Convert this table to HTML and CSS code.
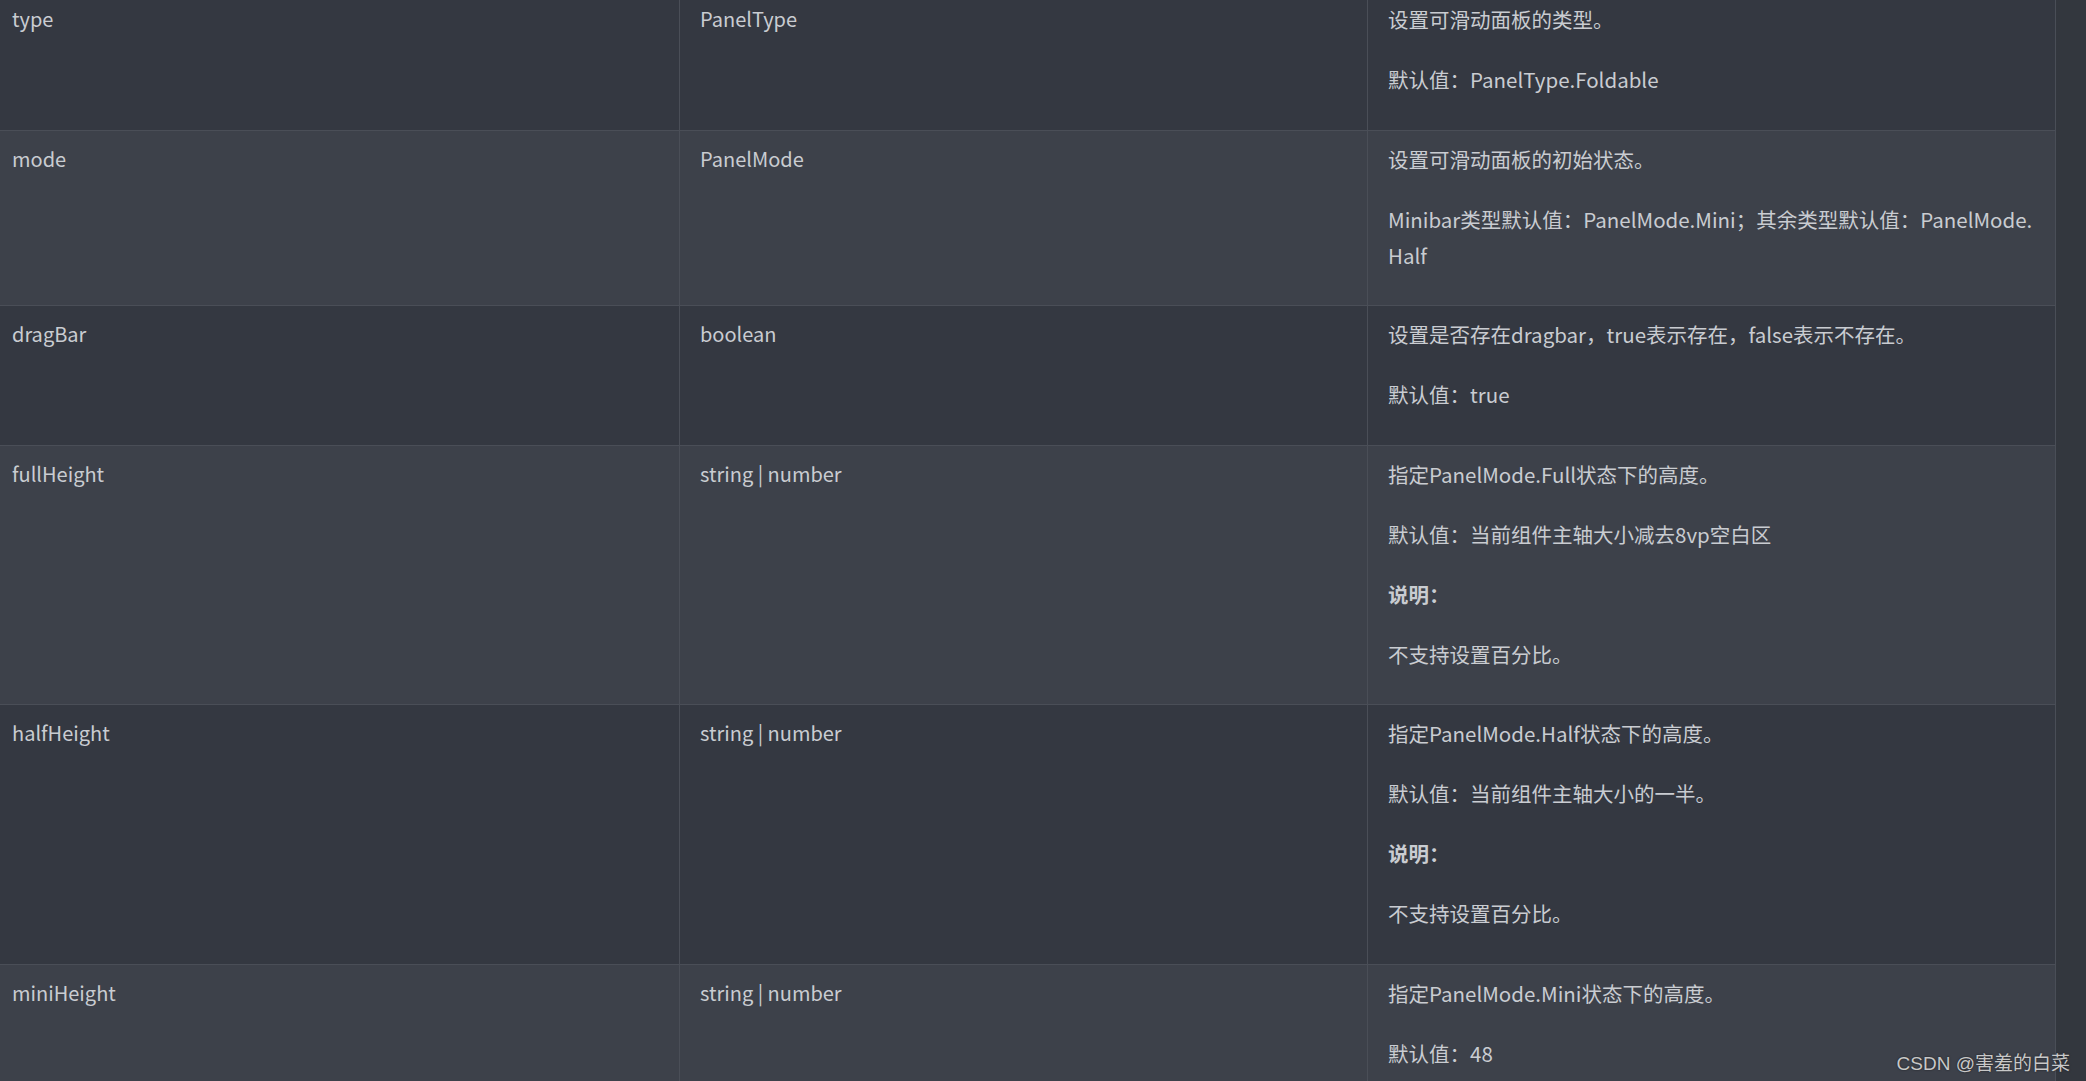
FILE: index.html
```html
<!DOCTYPE html>
<html lang="zh-CN">
<head>
<meta charset="utf-8">
<title>Panel 属性</title>
<link rel="stylesheet" href="styles.css">
</head>
<body>
<div class="page">
  <table class="props">
    <colgroup><col class="c"><col class="c"><col class="c"></colgroup>
    <tbody>
      <tr>
        <td>type</td>
        <td>PanelType</td>
        <td class="desc"><p>设置可滑动面板的类型。</p><p>默认值：PanelType.Foldable</p></td>
      </tr>
      <tr>
        <td>mode</td>
        <td>PanelMode</td>
        <td class="desc"><p>设置可滑动面板的初始状态。</p><p>Minibar类型默认值：PanelMode.Mini；其余类型默认值：PanelMode.<wbr>Half</p></td>
      </tr>
      <tr>
        <td>dragBar</td>
        <td>boolean</td>
        <td class="desc"><p>设置是否存在dragbar，true表示存在，false表示不存在。</p><p>默认值：true</p></td>
      </tr>
      <tr>
        <td>fullHeight</td>
        <td>string | number</td>
        <td class="desc"><p>指定PanelMode.Full状态下的高度。</p><p>默认值：当前组件主轴大小减去8vp空白区</p><p><strong>说明：</strong></p><p>不支持设置百分比。</p></td>
      </tr>
      <tr>
        <td>halfHeight</td>
        <td>string | number</td>
        <td class="desc"><p>指定PanelMode.Half状态下的高度。</p><p>默认值：当前组件主轴大小的一半。</p><p><strong>说明：</strong></p><p>不支持设置百分比。</p></td>
      </tr>
      <tr>
        <td>miniHeight</td>
        <td>string | number</td>
        <td class="desc"><p>指定PanelMode.Mini状态下的高度。</p><p>默认值：48</p></td>
      </tr>
    </tbody>
  </table>
  <div class="watermark">CSDN @害羞的白菜</div>
</div>
</body>
</html>
```

FILE: styles.css
```css
html, body {
  margin: 0;
  padding: 0;
  height: 100%;
  overflow: hidden;
}
body {
  background: #33373e;
  font-family: "Noto Sans CJK SC", "Noto Sans", sans-serif;
  font-size: 20px;
  color: #c9ccd1;
}
.page {
  height: 100%;
}
.props {
  border-collapse: collapse;
  table-layout: fixed;
  width: 2065px;
  margin: -10px 0 0 -9px;
}
.props .c {
  width: 33.333%;
}
.props td {
  vertical-align: top;
  border: 1px solid #4a4e57;
  padding: 10px 20px 8.5px 20px;
  line-height: 36px;
}
.props td.desc {
  font-size: 20.5px;
  padding-right: 12px;
}
.props tr:nth-child(odd) td {
  background: #343841;
}
.props tr:nth-child(even) td {
  background: #3d414a;
}
.props p {
  margin: 0 0 24px 0;
}
.props strong {
  font-weight: 700;
}
.watermark {
  position: absolute;
  right: 16px;
  bottom: 6px;
  font-family: "Liberation Sans", "Noto Sans CJK SC", sans-serif;
  font-size: 19px;
  color: #c8c8c8;
  text-shadow: 0 0 2px rgba(0, 0, 0, 0.6);
}
```
